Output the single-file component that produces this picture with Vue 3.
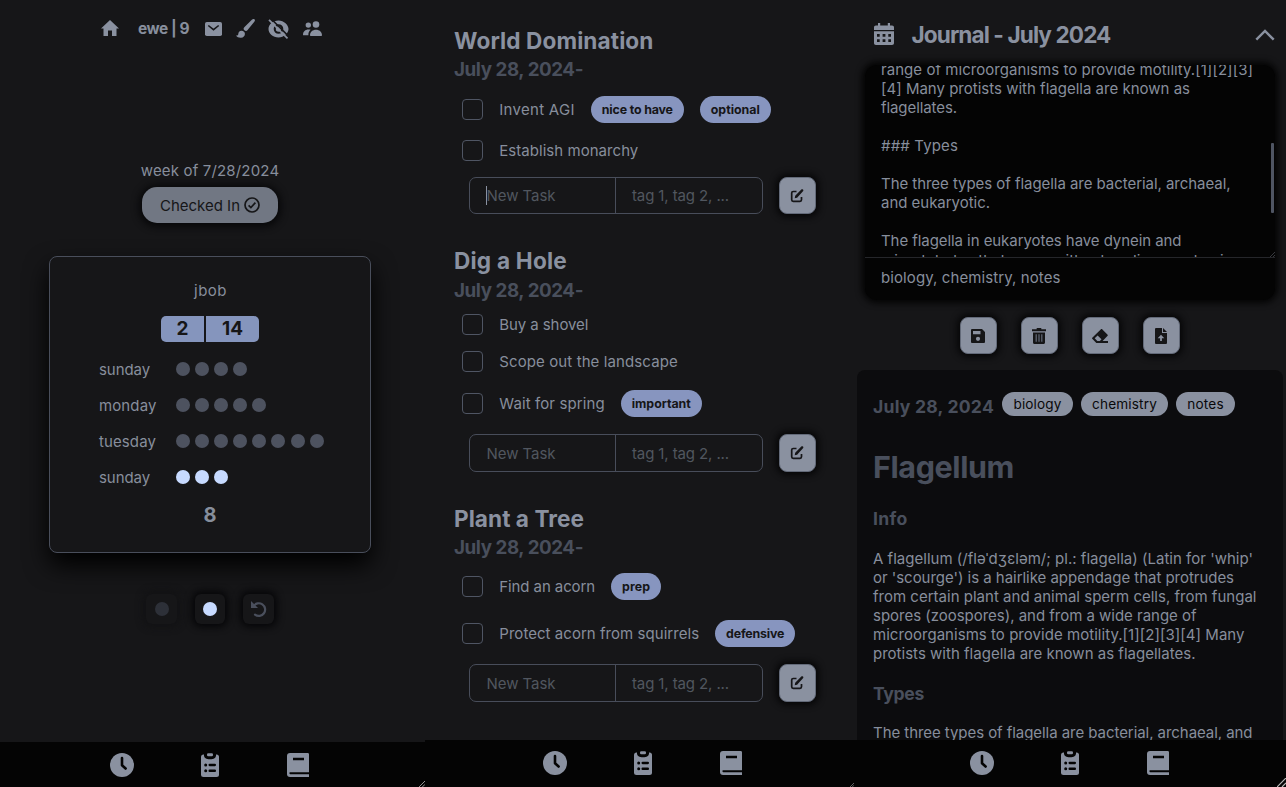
<script setup>
const bins = [
  { day: 'sunday', count: 4, w: 51 },
  { day: 'monday', count: 5, w: 57.5 },
  { day: 'tuesday', count: 8, w: 57 },
  { day: 'sunday', count: 3, w: 51, active: true },
]

const projects = [
  {
    name: 'World Domination', w: 199.5, height: 220, gap: 3, end: 8, input: 37, dateHeight: 28, focused: true,
    tasks: [
      { text: 'Invent AGI', w: 75.5, h: 45, tags: [{ text: 'nice to have', w: 71, box: 93 }, { text: 'optional', w: 49, box: 71 }] },
      { text: 'Establish monarchy', w: 139, h: 37, tags: [] },
    ],
  },
  {
    name: 'Dig a Hole', w: 113, height: 258, gap: 0, end: 7, input: 38, dateHeight: 30,
    tasks: [
      { text: 'Buy a shovel', w: 89, h: 37, tags: [] },
      { text: 'Scope out the landscape', w: 178.5, h: 37, tags: [] },
      { text: 'Wait for spring', w: 105.5, h: 47, tags: [{ text: 'important', w: 59, box: 81 }] },
    ],
  },
  {
    name: 'Plant a Tree', w: 130, height: 230, gap: 1, end: 7, input: 38, dateHeight: 28,
    tasks: [
      { text: 'Find an acorn', w: 95.8, h: 47, tags: [{ text: 'prep', w: 28, box: 50 }] },
      { text: 'Protect acorn from squirrels', w: 199.8, h: 47, tags: [{ text: 'defensive', w: 58, box: 80 }] },
    ],
  },
]

const draft = [
  ['range of microorganisms to provide motility.[1][2][3]', 372],
  ['[4] Many protists with flagella are known as', 309],
  ['flagellates.', 76],
  ['', 0],
  ['### Types', 77],
  ['', 0],
  ['The three types of flagella are bacterial, archaeal,', 349.5],
  ['and eukaryotic.', 109],
  ['', 0],
  ['The flagella in eukaryotes have dynein and', 300.5],
  ['microtubules that move with a bending mechanism', 364],
]

const entry = [
  ["A flagellum (/fləˈdʒɛləm/; pl.: flagella) (Latin for 'whip'", 380],
  ["or 'scourge') is a hairlike appendage that protrudes", 361],
  ['from certain plant and animal sperm cells, from fungal', 383.5],
  ['spores (zoospores), and from a wide range of', 323.5],
  ['microorganisms to provide motility.[1][2][3][4] Many', 371.5],
  ['protists with flagella are known as flagellates.', 322.5],
]

const entryTags = [
  { text: 'biology', w: 48, box: 71 },
  { text: 'chemistry', w: 65, box: 87 },
  { text: 'notes', w: 36.5, box: 59 },
]

const panels = ['timer', 'tasks', 'journal']

// Tracks a run of text out or in so that it fills the given measure.
const vFit = {
  mounted(el, { value }) {
    const n = el.textContent.length
    if (!value || !n) return
    const natural = el.getBoundingClientRect().width
    el.style.letterSpacing = `${(value - natural) / n}px`
  },
}
</script>

<template>
  <div class="screen">
    <section v-for="p in panels" :key="p" class="panel" :class="p">
      <div v-if="p === 'timer'" class="body">
        <header class="top">
          <svg class="i-home" viewBox="0 0 18 16"><path d="M7 16v-5.500h4V16h4.500V8.500H18L9 0 0 8.500h2.500V16z" /></svg>
          <b class="user"><span v-fit="51">ewe | 9</span></b>
          <svg class="i-mail" viewBox="0 0 17 14"><rect width="17" height="14" rx="1.8" /><path class="cut" d="M3.300 3.500l5.200 4.200 5.200-4.200" /></svg>
          <svg class="i-brush" viewBox="0 0 19 19"><path d="M18.600.4c-.8-.7-1.700-.4-2.500.2L8.300 8.200c-.7.800-.9 1.600-.5 2.300.5.900 1.200 1.300 2 1.500.7.100 1.300-.3 1.800-.9l6.700-8.300c.7-.9.900-1.800.3-2.400zM5.400 11.800c-2 .1-3 1.400-3.100 3.200-.1 1.200-.9 1.700-2.300 1.600 1.100 1.600 3 2.400 5 2.200 2.400-.2 4-1.800 3.900-4 0-1.700-1.500-3.100-3.500-3z" /></svg>
          <svg class="i-eye" viewBox="0 0 21 20"><path fill-rule="evenodd" d="M10.500 1.500C16 1.500 20.500 6 20.500 10S16 18.500 10.500 18.500.5 14.500.5 10 5 1.500 10.500 1.500zm0 3.700a4.800 4.800 0 1 0 0 9.600 4.800 4.800 0 0 0 0-9.600z" /><circle cx="10.500" cy="10" r="2.700" /><path class="cut" d="M2.500-.8l18.500 18.500" /><path class="slash" d="M1 .8l18.500 18.500" /></svg>
          <svg class="i-people" viewBox="0 0 19 15"><circle cx="13" cy="3.500" r="3.300" /><circle cx="5.300" cy="4.100" r="2.700" /><path d="M7 14.300c0-3.500 2.700-5.600 6-5.600s6 2.100 6 5.600c0 .4-.3.7-.7.7H7.700c-.4 0-.7-.3-.7-.7zM0 13.700c0-3.200 2.300-5.300 5.300-5.300.9 0 1.700.1 2.300.4-1.500 1.200-2.300 2.900-2.200 5.200v.3H.6c-.4 0-.6-.2-.6-.6z" /></svg>
        </header>
        <p class="week"><span v-fit="138.5">week of 7/28/2024</span></p>
        <button class="checked">
          <span v-fit="80">Checked In</span>
          <svg viewBox="0 0 16 16"><circle cx="8" cy="8" r="7" /><path d="M4.600 8.300l2.300 2.300 4.500-5" /></svg>
        </button>
        <div class="card">
          <p class="name"><span v-fit="33">jbob</span></p>
          <div class="score"><b>2</b><b>14</b></div>
          <div v-for="(r, i) in bins" :key="i" class="row" :class="{ active: r.active }">
            <span class="day"><span v-fit="r.w">{{ r.day }}</span></span>
            <i v-for="n in r.count" :key="n" class="dot"></i>
          </div>
          <b class="total">8</b>
        </div>
        <div class="controls">
          <button class="dim"><i class="dot"></i></button>
          <button class="lit"><i class="dot"></i></button>
          <button class="undo">
            <svg viewBox="0 0 16 16"><path d="M2.500 5.200A6.300 6.300 0 1 1 4 13.600" /><path class="head" d="M0 0v7h7z" /></svg>
          </button>
        </div>
      </div>

      <div v-else-if="p === 'tasks'" class="body">
        <div v-for="g in projects" :key="g.name" class="project" :style="{ height: g.height + 'px' }">
          <h2><span v-fit="g.w">{{ g.name }}</span></h2>
          <h3 :style="{ lineHeight: g.dateHeight + 'px' }"><span v-fit="129">July 28, 2024-</span></h3>
          <ul :style="{ marginTop: g.gap + 'px', marginBottom: g.end + 'px' }">
            <li v-for="t in g.tasks" :key="t.text" :style="{ height: t.h + 'px' }">
              <i class="box"></i>
              <span class="label" :style="{ width: t.w + 'px' }"><span v-fit="t.w">{{ t.text }}</span></span>
              <b v-for="tag in t.tags" :key="tag.text" class="tag" :style="{ width: tag.box + 'px' }"><span v-fit="tag.w">{{ tag.text }}</span></b>
            </li>
          </ul>
          <div class="new" :style="{ height: g.input + 'px' }">
            <div class="fields">
              <div class="field" :class="{ focused: g.focused }"><span v-fit="69">New Task</span></div>
              <div class="field"><span v-fit="97">tag 1, tag 2, ...</span></div>
            </div>
            <button class="act">
              <svg viewBox="0 0 14 14"><path class="line" d="M6.500 2.500H3.200c-1 0-1.500.6-1.500 1.500v6.800c0 1 .5 1.500 1.500 1.500H10c1 0 1.500-.5 1.500-1.500V8" /><path d="M4.700 9.300l.5-2.600L11.300.6c.5-.5 1.200-.5 1.700 0s.5 1.200 0 1.700L7.100 8.700z" /></svg>
            </button>
          </div>
        </div>
      </div>

      <div v-else class="body">
        <header class="jhead">
          <svg class="i-cal" viewBox="0 0 20 22"><path fill-rule="evenodd" d="M4 0h2.200v2.500h7.600V0H16v2.500h2c1.300 0 2 .7 2 2V7H0V4.500c0-1.300.7-2 2-2h2zM0 8.300h20V20c0 1.300-.7 2-2 2H2c-1.300 0-2-.7-2-2zM3 11v2.700h2.700V11zm5.600 0v2.700h2.800V11zm5.700 0v2.700H17V11zM3 16.300V19h2.700v-2.700zm5.600 0V19h2.800v-2.700zm5.700 0V19H17v-2.700z" /></svg>
          <h2><span v-fit="199">Journal - July 2024</span></h2>
          <svg class="i-up" viewBox="0 0 20 12"><path d="M1.300 10.700L10 2l8.700 8.700" /></svg>
        </header>
        <div class="editor">
          <div class="area">
            <div class="lines">
              <p v-for="(l, i) in draft" :key="i"><span v-fit="l[1]">{{ l[0] }}</span></p>
            </div>
            <i class="thumb"></i>
            <svg class="grip" viewBox="0 0 5 5"><path d="M0 5l5-5M3 5l2-2" /></svg>
          </div>
          <p class="taglist"><span v-fit="179.500">biology, chemistry, notes</span></p>
        </div>
        <div class="actions">
          <button class="act"><svg viewBox="0 0 14 14"><path fill-rule="evenodd" d="M1.300 0H11l3 3v9.700c0 .8-.5 1.300-1.300 1.300H1.300C.5 14 0 13.500 0 12.700V1.300C0 .5.500 0 1.300 0zM2 2v3.300h7.500V2zm5 5.700a2.100 2.100 0 1 0 0 4.200 2.100 2.100 0 0 0 0-4.200z" /></svg></button>
          <button class="act"><svg class="tall" viewBox="0 0 14 16"><path d="M4.700 0h4.600v1.200H14v2H0v-2h4.700zM1 4.500h12v10c0 .9-.6 1.500-1.500 1.500h-9c-.9 0-1.500-.6-1.500-1.500z" /><path class="slots" d="M4.200 6.200v7.500M7 6.200v7.500M9.800 6.200v7.500" /></svg></button>
          <button class="act"><svg class="wide" viewBox="0 0 16 14"><path fill-rule="evenodd" d="M8.700.4c.6-.5 1.200-.5 1.700 0l5 5c.5.5.5 1.100 0 1.700L10.600 12H16v2H4.300L.5 10.100c-.6-.6-.6-1.200 0-1.700zM5.600 6.400L2.700 9.300 5.300 12h2.600l1.600-1.700z" /></svg></button>
          <button class="act"><svg class="file" viewBox="0 0 12 16"><path fill-rule="evenodd" d="M1.300 0H7v5h5v9.700c0 .8-.5 1.300-1.300 1.300H1.300C.5 16 0 15.500 0 14.700V1.300C0 .5.500 0 1.300 0zM6 6.800L2.700 10.200h2.400V13h1.800v-2.800h2.400zM8 0l4 4H8z" /></svg></button>
        </div>
        <article class="entry">
          <div class="meta">
            <h3><span v-fit="121">July 28, 2024</span></h3>
            <span v-for="t in entryTags" :key="t.text" class="chip" :style="{ width: t.box + 'px' }"><span v-fit="t.w">{{ t.text }}</span></span>
          </div>
          <h1><span v-fit="141">Flagellum</span></h1>
          <h4><span v-fit="34.500">Info</span></h4>
          <p v-for="l in entry" :key="l[0]"><span v-fit="l[1]">{{ l[0] }}</span></p>
          <h4 class="types"><span v-fit="51">Types</span></h4>
          <p><span v-fit="379.500">The three types of flagella are bacterial, archaeal, and</span></p>
        </article>
      </div>

      <nav>
        <svg viewBox="0 0 24 24"><circle cx="12" cy="12" r="12" /><path class="hand" d="M12 5v7.300l3.600 3.200" /></svg>
        <svg class="clip" viewBox="0 0 18 24"><rect y="1.500" width="18" height="22.500" rx="2.500" /><path class="hole" d="M3 0h12v2.300C15 5.200 12.800 6.300 9 6.300S3 5.200 3 2.300z" /><rect x="6" y=".2" width="6" height="3" rx="1.300" /><g class="hole"><circle cx="4.700" cy="12" r="1.500" /><circle cx="4.700" cy="17.800" r="1.500" /><rect x="7.500" y="10.800" width="7.500" height="2.400" rx="1.100" /><rect x="7.500" y="16.600" width="7.500" height="2.400" rx="1.100" /></g></svg>
        <svg class="book" viewBox="0 0 22 24"><path d="M3 0h17.500c1 0 1.500.5 1.500 1.500V24H3c-2 0-3-1.200-3-3V3c0-2 1-3 3-3z" /><path class="hole" d="M6 4.800h11v2.400H6zM3.300 19.300H22v1.900H3.300c-1.200 0-1.200-1.900 0-1.900z" /></svg>
      </nav>
      <svg class="corner" viewBox="0 0 9 9"><path d="M0 9l9-9M5 9l4-4" /></svg>
    </section>
  </div>
</template>

<style>
html, body { background: #161618; overflow: hidden; }
</style>

<style scoped>
* { box-sizing: border-box; margin: 0; padding: 0; }
.screen {
  display: flex; width: 1286px; height: 787px; overflow: hidden;
  background: #161618; color: #878e9c;
  font: 400 15px/19px Inter, "Noto Sans", sans-serif;
}
.panel { position: relative; display: flex; flex-direction: column; height: 787px; overflow: hidden; }
.timer { width: 425px; }
.tasks { width: 429px; }
.journal { width: 432px; }
.body { flex: 1; min-height: 0; overflow: hidden; }
span { white-space: nowrap; }
button { border: 0; font: inherit; display: flex; align-items: center; justify-content: center; flex-shrink: 0; }
svg { fill: #8a91a0; display: block; flex-shrink: 0; }
ul { list-style: none; }
b, h1, h2, h3, h4 { font-weight: 700; }

nav { height: 47px; background: #040404; display: flex; align-items: flex-start; padding: 11px 0 0 118px; flex-shrink: 0; }
.timer nav { height: 45px; padding-left: 110px; }
.journal nav { padding-left: 116px; }
nav svg { width: 24px; height: 24px; }
nav .clip { width: 18px; margin-left: 67px; }
nav .book { width: 22px; margin-left: 68px; }
.hand { fill: none; stroke: #040404; stroke-width: 2.6; stroke-linecap: round; stroke-linejoin: round; }
.hole { fill: #040404; }
.corner { position: absolute; right: 0; bottom: 0; width: 6px; height: 6px; fill: none; stroke: #b8b8b8; stroke-width: 1.2; }
.tasks .corner { width: 4px; height: 4px; }
.journal .corner { width: 9px; height: 9px; }

/* timer */
.timer .body { display: flex; flex-direction: column; align-items: center; padding-right: 5px; }
.top { display: flex; align-items: center; align-self: flex-start; height: 20px; margin: 18.500px 0 0 101px; }
.i-home { width: 18px; height: 16px; margin-top: -1px; }
.user { width: 51px; margin: 0 16px 0 19px; font-size: 15.5px; }
.i-mail { width: 17px; height: 14px; }
.i-brush { width: 19px; height: 19px; margin-left: 14px; }
.i-eye { width: 21px; height: 20px; margin-left: 13px; }
.i-people { width: 19px; height: 15px; margin-left: 14px; }
.cut { fill: none; stroke: #161618; stroke-width: 1.6; }
.slash { fill: none; stroke: #8a91a0; stroke-width: 1.7; }
.week { margin-top: 122.500px; line-height: 20px; }
.checked {
  width: 136px; height: 36px; margin-top: 6px; gap: 4px; border-radius: 15px;
  background: #717783; color: #161618; box-shadow: 0 1px 7px 3px #08080a;
}
.checked svg { width: 16px; height: 16px; fill: none; stroke: #161618; stroke-width: 1.7; }
.card {
  width: 322px; height: 297px; margin-top: 33px; border: 1px solid #494e5b; border-radius: 8px;
  background: #161618; box-shadow: 0 12px 24px 0 #000;
  display: flex; flex-direction: column; align-items: center; flex-shrink: 0;
}
.name { margin-top: 24px; line-height: 19px; padding-left: 1px; }
.score { display: flex; gap: 2px; margin-top: 16px; height: 26px; margin-bottom: 9px; }
.score b { width: 43px; background: #8595bd; color: #161618; font-size: 19px; line-height: 26px; text-align: center; border-radius: 5px 0 0 5px; }
.score b + b { width: 53px; border-radius: 0 5px 5px 0; }
.row { display: flex; align-items: center; align-self: flex-start; height: 36px; margin-left: 49px; gap: 5.1px; }
.day { width: 71.900px; }
.dot { width: 14px; height: 14px; border-radius: 50%; background: #4d525f; flex-shrink: 0; }
.active .dot, .lit .dot { background: #c7daff; }
.total { font-size: 20px; line-height: 26px; margin-top: 7px; }
.controls { display: flex; margin-top: 41px; gap: 18px; }
.controls button { width: 30px; height: 30px; border-radius: 6px; background: #161618; box-shadow: 0 0 7px 3px #060608; }
.controls .dim { width: 31px; box-shadow: 0 0 7px 3px #121214; }
.dim .dot { background: #2d3038; }
.controls .undo { width: 31px; }
.undo svg { width: 16px; height: 16px; fill: none; stroke: #4a4f5c; stroke-width: 2.2; stroke-linecap: round; }
.undo .head { fill: #4a4f5c; stroke: none; }

/* tasks */
.tasks .body { padding: 26px 0 0 29px; }
.project h2, .jhead h2 { font-size: 22.600px; line-height: 30px; color: #8a91a0; }
.project h3 { font-size: 18.800px; color: #494f5c; }
.project li { display: flex; align-items: center; gap: 16px; padding-left: 8px; }
.box { width: 21px; height: 21px; margin-right: .3px; border: 1px solid #4f5563; border-radius: 4px; }
.tag { height: 27px; border-radius: 13.5px; background: #8795bf; color: #161618; font-size: 12.4px; line-height: 27px; text-align: center; }
.new { display: flex; margin-left: 15px; gap: 16px; }
.fields { display: flex; width: 294px; border: 1px solid #484d5a; border-radius: 7px; }
.field { display: flex; align-items: center; width: 145px; padding-left: 16.500px; color: #51565f; }
.field + .field { border-left: 1px solid #484d5a; padding-left: 16px; }
.focused { position: relative; }
.focused::before { content: ""; position: absolute; left: 16px; top: 8px; width: 1px; height: 19px; background: #8a91a0; }
.act { width: 37px; padding-right: 1px; border-radius: 8px; border: 1px solid #636a79; background: #8a91a0; box-shadow: 0 0 6px 3px #070708; }
.act svg { width: 14px; height: 14px; fill: #161618; }
.act .line { fill: none; stroke: #161618; stroke-width: 1.7; }

/* journal */
.jhead { display: flex; align-items: center; height: 65px; padding: 3px 0 0 20px; }
.i-cal { width: 20px; height: 22px; }
.jhead h2 { width: 199px; margin: 1px 144px 0 17.500px; }
.i-up { width: 20px; height: 12px; margin-top: 1px; fill: none; stroke: #8a91a0; stroke-width: 2.4; }
.editor { width: 410px; height: 235px; margin-left: 11px; border-radius: 12px; background: #040404; box-shadow: 0 0 6px 3px #040404; }
.area { position: relative; height: 193px; border-bottom: 1px solid #25262a; overflow: hidden; padding-left: 16px; }
.lines { margin-top: -5px; }
.lines p { height: 19px; }
.lines p:last-child { padding-top: 1px; }
.thumb { position: absolute; right: 1px; top: 78px; width: 3px; height: 70px; background: #4f5563; border-radius: 1px; }
.grip { position: absolute; right: 0; bottom: 0; width: 5px; height: 5px; stroke: #44464c; stroke-width: .8; }
.taglist { padding: 10px 0 0 16px; }
.actions { display: flex; gap: 24px; margin: 17px 0 0 106px; }
.actions .act { height: 37px; }
.act .tall { height: 16px; }
.act .wide { width: 16px; }
.act .file { width: 12px; height: 16px; }
.act .slots { stroke: #636a79; stroke-width: 1.2; }
.entry { width: 426px; height: 400px; margin: 16px 0 0 3px; padding: 22px 0 0 16px; border-radius: 8px; background: #0c0c0e; }
.meta { display: flex; gap: 8px; height: 30px; align-items: flex-start; }
.meta h3 { width: 121px; font-size: 17.6px; line-height: 30px; color: #494f5c; }
.chip { height: 24px; border-radius: 12px; background: #8a91a0; color: #08080a; font-size: 13.600px; line-height: 24px; text-align: center; }
.entry h1 { font-size: 30.500px; line-height: 40px; margin-top: 25px; color: #494f5c; }
.entry h4 { font-size: 17.600px; line-height: 24px; margin: 20px 0 18px; color: #494f5c; }
.entry .types { margin: 19px 0 17px; }
</style>
